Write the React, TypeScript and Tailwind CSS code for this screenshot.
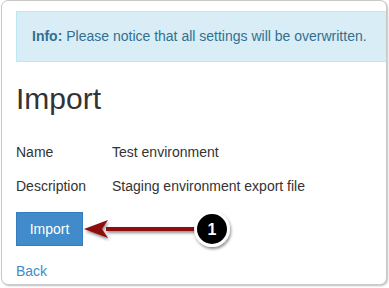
export default function App() {
  return (
    <div
      className="w-[389px] h-[288px] bg-white overflow-hidden"
      style={{ fontFamily: '"Liberation Sans", Arial, sans-serif' }}
    >
      <div className="ml-[1px] w-[386px] h-[285px] rounded-[7px] border border-[#c9c9c9] bg-white shadow-[1px_1px_2px_rgba(0,0,0,0.25)] overflow-hidden">
        <div className="pl-[14px]">
          <div className="mt-[10px] w-[400px] h-[51px] border border-[#bce8f1] bg-[#d9edf7] flex items-center pl-[15px] text-[14px] text-[#31708f] whitespace-nowrap">
            <span className="font-bold">Info:</span>
            <span>&nbsp;Please notice that all settings will be overwritten.</span>
          </div>

          <h1 className="mt-[19px] text-[30px] leading-[36px] text-[#333] font-normal">Import</h1>

          <div className="mt-[25px] flex text-[14px] leading-[20px] text-[#333]">
            <div className="w-[96px]">Name</div>
            <div>Test environment</div>
          </div>
          <div className="mt-[14px] flex text-[14px] leading-[20px] text-[#333]">
            <div className="w-[96px]">Description</div>
            <div>Staging environment export file</div>
          </div>

          <div className="relative mt-[16px] h-[34px]">
            <button className="h-[34px] w-[67px] bg-[#428bca] border border-[#357ebd] text-white text-[14px] leading-[20px]">
              Import
            </button>
            <svg
              className="absolute left-[66px] top-[-4px] overflow-visible"
              width="152"
              height="42"
              viewBox="0 0 152 42"
            >
              <defs>
                <filter id="sh" x="-20%" y="-40%" width="140%" height="180%">
                  <feDropShadow dx="1" dy="2" stdDeviation="1.5" floodColor="#000" floodOpacity="0.45" />
                </filter>
              </defs>
              <g filter="url(#sh)">
                <rect x="24" y="19" width="96" height="4" fill="#8e0b0b" />
                <polygon points="2,21 26,12 20,21 26,30" fill="#8e0b0b" />
              </g>
              <g filter="url(#sh)">
                <circle cx="130" cy="21" r="16.5" fill="#000" stroke="#fff" strokeWidth="3" />
              </g>
              <text
                x="130"
                y="26.5"
                textAnchor="middle"
                fill="#fff"
                fontSize="16"
                fontWeight="bold"
                fontFamily="Liberation Sans, Arial, sans-serif"
              >
                1
              </text>
            </svg>
          </div>

          <div className="mt-[15px] text-[14px] leading-[20px] text-[#428bca]">Back</div>
        </div>
      </div>
    </div>
  );
}
